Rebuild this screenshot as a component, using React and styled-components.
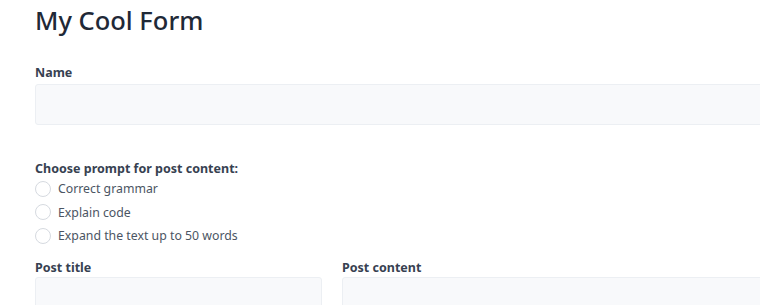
import styled, { createGlobalStyle } from "styled-components";

const GlobalStyle = createGlobalStyle`
  body {
    margin: 0;
    background: #ffffff;
    font-family: "Noto Sans", "Open Sans", sans-serif;
    overflow: hidden;
  }
`;

const Page = styled.div`
  width: 1000px;
  padding: 0 0 0 35px;
`;

const Title = styled.h1`
  margin: 0;
  padding-top: 2px;
  font-size: 25.5px;
  font-weight: 500;
  line-height: 36px;
  color: #1f2937;
`;

const Field = styled.div`
  display: flex;
  flex-direction: column;
  margin-top: ${(p) => p.$top || 0}px;
`;

const Label = styled.label`
  font-size: 12.5px;
  font-weight: 700;
  line-height: 16px;
  color: #374151;
  margin-bottom: ${(p) => p.$gap ?? 3}px;
`;

const Input = styled.input`
  box-sizing: border-box;
  height: 41px;
  width: 100%;
  background: #f8f9fb;
  border: 1px solid #eceff3;
  border-radius: 3px;
  outline: none;
`;

const RadioList = styled.div`
  display: flex;
  flex-direction: column;
`;

const RadioRow = styled.label`
  display: flex;
  align-items: center;
  gap: 7px;
  height: 23.5px;
  font-size: 12.3px;
  color: #4b5563;
`;

const Circle = styled.span`
  box-sizing: border-box;
  flex-shrink: 0;
  width: 16px;
  height: 16px;
  border-radius: 50%;
  border: 1px solid #d6dae0;
  background: #ffffff;
`;

const Columns = styled.div`
  display: grid;
  grid-template-columns: 287px 1fr;
  column-gap: 20px;
  margin-top: 12px;
`;

const options = ["Correct grammar", "Explain code", "Expand the text up to 50 words"];

export default function App() {
  return (
    <Page>
      <GlobalStyle />
      <Title>My Cool Form</Title>
      <Field $top={27}>
        <Label>Name</Label>
        <Input />
      </Field>
      <Field $top={36}>
        <Label $gap={0}>Choose prompt for post content:</Label>
        <RadioList>
          {options.map((o) => (
            <RadioRow key={o}>
              <Circle />
              {o}
            </RadioRow>
          ))}
        </RadioList>
      </Field>
      <Columns>
        <Field>
          <Label $gap={1}>Post title</Label>
          <Input />
        </Field>
        <Field>
          <Label $gap={1}>Post content</Label>
          <Input />
        </Field>
      </Columns>
    </Page>
  );
}
